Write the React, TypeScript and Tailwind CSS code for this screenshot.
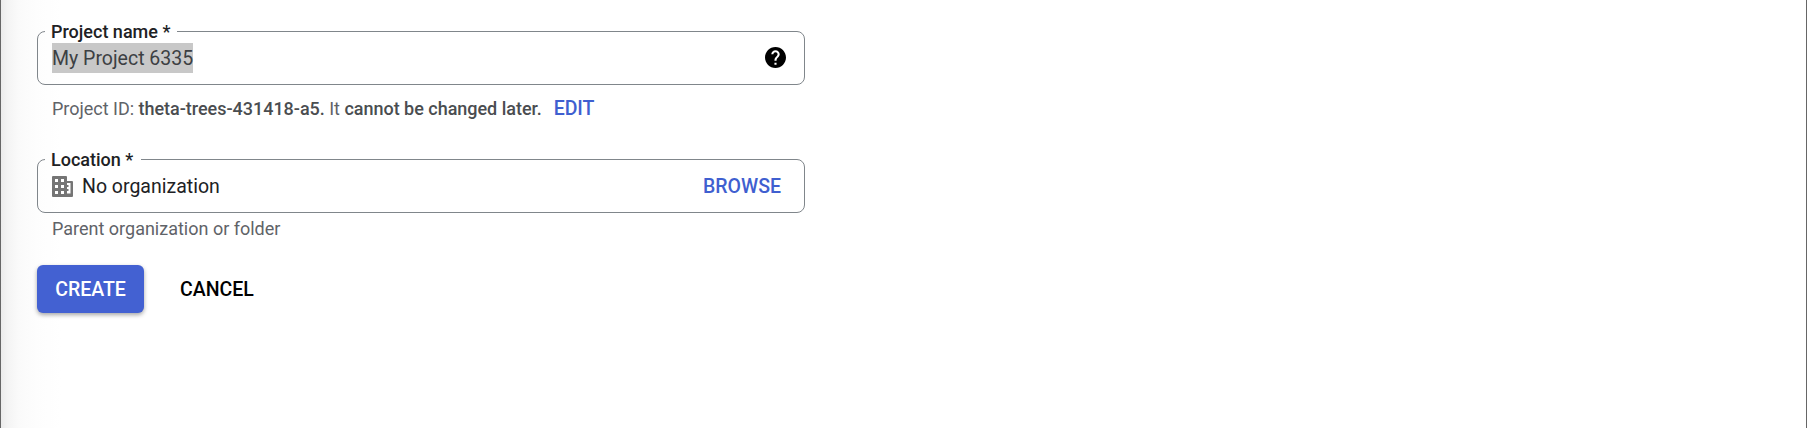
import type { ReactNode } from 'react';

function OutlinedField({ label, legendClass, children }: { label: string; legendClass: string; children: ReactNode }) {
  return (
    <fieldset className="h-[64px] w-[768px] rounded-[8px] border border-[#80868b] pl-[7px] pr-[18px]">
      <legend className={`h-[21px] whitespace-nowrap pl-[6px] text-[18px] leading-[21px] font-medium text-[#202124] ${legendClass}`}>
        {label}
      </legend>
      <div className="mt-px flex h-[30px] items-center pl-[7px]">{children}</div>
    </fieldset>
  );
}

function HelpIcon() {
  return (
    <svg viewBox="2 2 20 20" className="-mt-[2px] ml-auto h-[21px] w-[21px]" fill="#000" aria-hidden="true">
      <path d="M12 2C6.48 2 2 6.48 2 12s4.480 10 10 10 10-4.480 10-10S17.520 2 12 2zm1 17h-2v-2h2v2zm2.070-7.750-.9.920C13.450 12.900 13 13.500 13 15h-2v-.5c0-1.100.450-2.100 1.170-2.830l1.240-1.260c.370-.360.590-.860.590-1.410 0-1.100-.9-2-2-2s-2 .9-2 2H8c0-2.210 1.790-4 4-4s4 1.790 4 4c0 .880-.360 1.680-.930 2.250z" />
    </svg>
  );
}

function OrganizationIcon() {
  return (
    <svg viewBox="0 0 21 21" className="mt-px h-[21px] w-[21px]" fill="#757575" aria-hidden="true">
      <path fillRule="evenodd" d="M1 0h13q1 0 1 1v4h5q1 0 1 1v14q0 1-1 1H1q-1 0-1-1V1Q0 0 1 0zM3 3v3h3V3zm6 0v3h3V3zM3 9v3h3V9zm6 0v3h3V9zM3 15v3h3v-3zm6 0v3h3v-3zM15 7v2h1.500v2H15v2h1.500v2H15v2.500h3.500V7z" />
    </svg>
  );
}

export default function App() {
  return (
    <main className="h-[428px] w-full border-x border-[#666] bg-[linear-gradient(to_right,#ebebeb_0,#f4f4f4_7px,#fafafa_17px,#fdfdfd_35px,#fff_60px)] pt-[21px] pl-[36px] font-['Roboto',sans-serif] text-[18px]">
      <OutlinedField label="Project name *" legendClass="w-[132px]">
        <span className="h-[30px] bg-[#c8c8c8] pt-px text-[19.5px] leading-[30px] text-[#3c4043]">My Project 6335</span>
        <HelpIcon />
      </OutlinedField>
      <p className="mt-[13px] flex h-[21px] items-center pl-[15px] whitespace-pre text-[#5f6368]">
        <span className="tracking-[-0.02px]">Project ID: <span className="font-medium text-[#4a4d50]">theta-trees-431418-a5.</span> It <span className="font-medium text-[#4a4d50]">cannot be changed later.</span></span>
        <button className="ml-[12px] pt-px text-[19.5px] font-medium text-[#3f5fd0]">EDIT</button>
      </p>
      <div className="mt-[30px]">
        <OutlinedField label="Location *" legendClass="w-[96px]">
          <OrganizationIcon />
          <span className="ml-[9px] pt-[2px] text-[19.5px] text-[#202124]">No organization</span>
          <button className="mr-[5px] ml-auto pt-px text-[19.5px] font-medium text-[#3f5fd0]">BROWSE</button>
        </OutlinedField>
      </div>
      <p className="mt-[5px] h-[21px] pl-[15px] leading-[21px] text-[#5f6368]">Parent organization or folder</p>
      <div className="mt-[26px] flex items-center text-[19.5px] font-medium">
        <button className="h-[48px] w-[107px] rounded-[6px] bg-[#4361d2] pt-[2px] text-white shadow-[0_2px_4px_rgba(0,0,0,0.35)]">CREATE</button>
        <button className="ml-[36px] pt-[2px] text-black">CANCEL</button>
      </div>
    </main>
  );
}
